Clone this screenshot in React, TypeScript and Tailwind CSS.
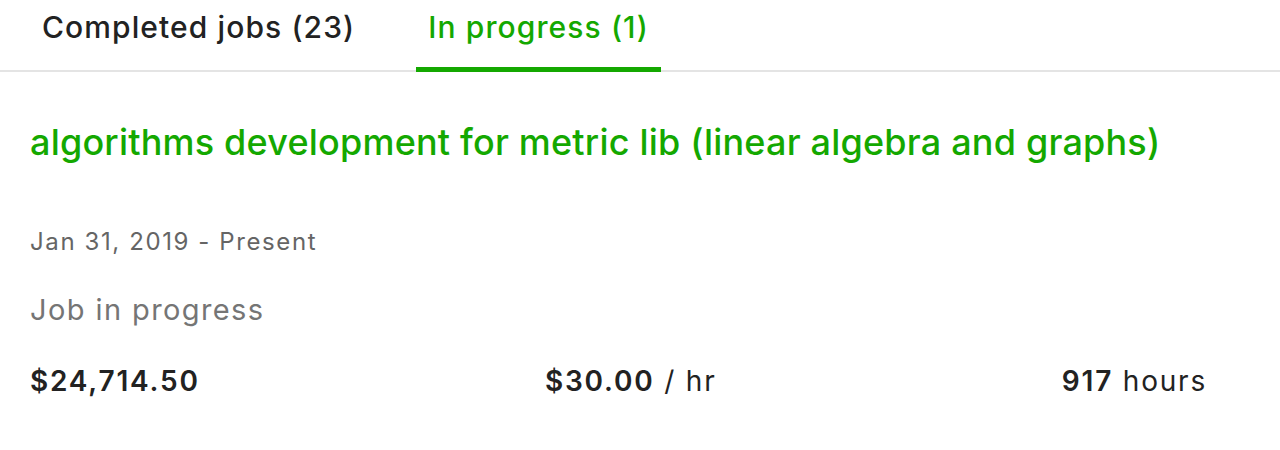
import React from "react";

export default function App() {
  return (
    <div className="w-[1280px] h-[450px] bg-white overflow-hidden" style={{ fontFamily: 'Inter, "Liberation Sans", Arial, sans-serif' }}>
      <div className="flex items-end border-b-2 border-[#e4e4e4] pl-[30px] gap-[49px] h-[72px]">
        <div className="h-full flex items-center px-[12px] pb-[15px] text-[30px] font-medium text-[#222222] tracking-[1.1px]">
          Completed jobs (23)
        </div>
        <div className="relative h-full flex items-center px-[12px] pb-[15px] text-[30px] font-medium text-[#14a800] tracking-[1.1px]">
          In progress (1)
          <div className="absolute left-0 right-0 -bottom-[2px] h-[5px] bg-[#14a800]" />
        </div>
      </div>
      <div className="px-[30px]">
        <div className="mt-[48px] text-[36px] font-medium text-[#14a800] leading-[44px] tracking-[0.2px]">
          algorithms development for metric lib (linear algebra and graphs)
        </div>
        <div className="mt-[64px] text-[24px] text-[#656565] leading-[28px] tracking-[1.6px]">Jan 31, 2019 - Present</div>
        <div className="mt-[36px] text-[29px] text-[#757575] leading-[36px] tracking-[1.4px]">Job in progress</div>
        <div className="mt-[36px] flex justify-between w-[1177px] text-[28px] text-[#222222] leading-[34px] tracking-[1.8px]">
          <span className="font-semibold">$24,714.50</span>
          <span><span className="font-semibold">$30.00</span> / hr</span>
          <span><span className="font-semibold">917</span> hours</span>
        </div>
      </div>
    </div>
  );
}
